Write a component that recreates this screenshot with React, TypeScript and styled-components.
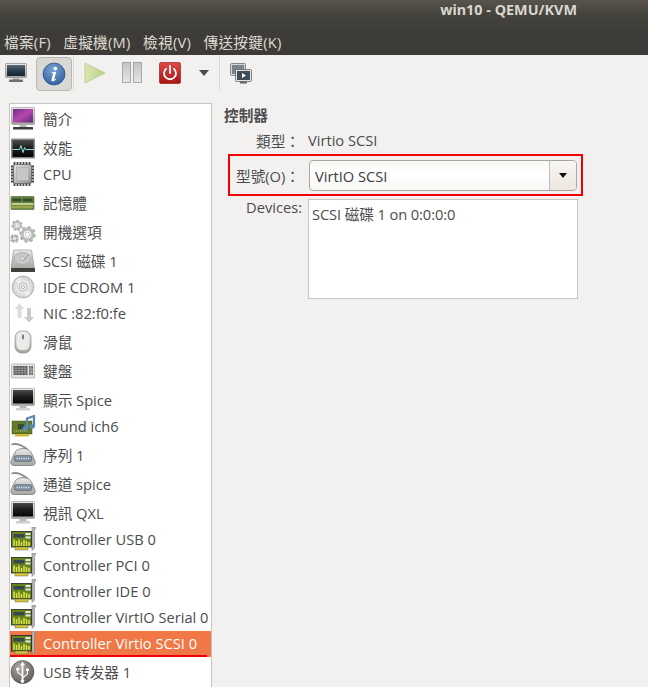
import React from 'react'
import styled, { createGlobalStyle } from 'styled-components'

const GlobalStyle = createGlobalStyle`
  html, body {
    margin: 0;
    padding: 0;
    background: #f2f1f0;
  }
  body {
    font-family: "Open Sans", "Noto Sans CJK TC", sans-serif;
    font-size: 14.67px;
    color: #4c4c4c;
  }
`

const Window = styled.div`
  width: 648px;
  height: 687px;
  overflow: hidden;
  background: #f2f1f0;
  display: flex;
  flex-direction: column;
`

const Header = styled.header`
  height: 55px;
  flex: none;
  background: linear-gradient(#58544b 0, #45433e 14px, #3e3c38 32px, #3c3b37 100%);
`

const TitleBar = styled.div`
  height: 19px;
  padding: 0 71px 0 0;
  display: flex;
  justify-content: flex-end;
  align-items: center;
  font-family: "Noto Sans", sans-serif;
  font-weight: 700;
  font-size: 14.4px;
  color: #d9d6cd;
`

const MenuBar = styled.nav`
  height: 36px;
  padding: 11px 0 0 4px;
  box-sizing: border-box;
  display: flex;
  gap: 12.5px;
  letter-spacing: 0.25px;
  line-height: 24px;
  color: #dfdbd2;
`

const Toolbar = styled.div`
  height: 36px;
  flex: none;
  display: flex;
  align-items: center;
  padding-left: 5px;
`

const ToolIcon = styled.svg<{ $ml?: number }>`
  display: block;
  flex: none;
  margin-left: ${(p) => p.$ml ?? 0}px;
`

const ActiveTool = styled.button`
  width: 36px;
  height: 34px;
  flex: none;
  margin: 1px 0 0 9px;
  padding: 0;
  display: flex;
  align-items: center;
  justify-content: center;
  border: 1px solid #b8b6b1;
  border-radius: 4px;
  background: #dad8d5;
`

const ToolSep = styled.div<{ $ml: number }>`
  width: 1px;
  height: 36px;
  flex: none;
  margin-left: ${(p) => p.$ml}px;
  background: #dcdad6;
`

const Main = styled.main`
  flex: 1;
  min-height: 0;
  display: flex;
  padding: 12px 0 0 9px;
`

const DeviceList = styled.ul`
  width: 201px;
  height: 600px;
  flex: none;
  margin: 0;
  padding: 0;
  list-style: none;
  background: #fff;
  border: 1px solid #c7c5c1;
`

const DeviceRow = styled.li<{ $tall?: boolean; $selected?: boolean }>`
  position: relative;
  box-sizing: border-box;
  height: ${(p) => (p.$tall ? 29 : 26)}px;
  padding-bottom: ${(p) => (p.$tall ? 0 : 2)}px;
  display: flex;
  align-items: center;
  gap: 7px;
  white-space: nowrap;
  background: ${(p) => (p.$selected ? '#f07746' : 'transparent')};
  color: ${(p) => (p.$selected ? '#fff' : '#4c4c4c')};

  ${(p) =>
    p.$selected
      ? `&::after {
    content: '';
    position: absolute;
    left: 0;
    bottom: 0;
    width: 197px;
    height: 2px;
    background: #f00000;
  }`
      : ''}
`

const IconSlot = styled.span`
  width: 26px;
  height: 24px;
  flex: none;
  display: flex;
  align-items: center;
`

const Details = styled.section`
  flex: 1;
  padding: 3px 0 0 12px;
`

const Heading = styled.h2`
  margin: 0 0 5px;
  font-size: 14.67px;
  line-height: 18px;
  font-weight: 700;
  color: #4c4c4c;
`

const TypeRow = styled.div`
  display: flex;
  height: 22px;
  align-items: center;
`

const FieldLabel = styled.span<{ $w: number }>`
  width: ${(p) => p.$w}px;
  flex: none;
  text-align: right;
  white-space: nowrap;
`

const FieldValue = styled.span`
  margin-left: 8px;
`

const ModelBox = styled.div`
  width: 355px;
  height: 42px;
  box-sizing: border-box;
  margin: 3px 0 0 4px;
  border: 2px solid #f00000;
  display: flex;
  align-items: center;
`

const Combo = styled.div`
  width: 268px;
  height: 31px;
  box-sizing: border-box;
  margin-left: 9px;
  display: flex;
  align-items: stretch;
  border: 1px solid #a8a6a1;
  border-radius: 4px;
  background: linear-gradient(#f7f7f5, #fff 45%, #f8f7f5);
`

const ComboText = styled.div`
  flex: 1;
  padding-left: 5px;
  line-height: 31px;
  color: #3c3c3c;
`

const ComboArrow = styled.div`
  width: 26px;
  border-left: 1px solid #c0beb9;
  border-radius: 0 3px 3px 0;
  display: flex;
  align-items: center;
  justify-content: center;
  background: linear-gradient(#f7f6f4, #efe6df);

  &::before {
    content: '';
    border-style: solid;
    border-width: 5px 4px 0;
    border-color: #111 transparent transparent;
  }
`

const DevicesRow = styled.div`
  display: flex;
  margin-top: 3px;
`

const DevicesLabel = styled.span`
  width: 78px;
  flex: none;
  margin-top: -1px;
  text-align: right;
  line-height: 18px;
`

const DevicesBox = styled.div`
  width: 270px;
  height: 100px;
  box-sizing: border-box;
  margin-left: 6px;
  padding: 5px 3px;
  border: 1px solid #c7c5c1;
  background: #fff;
  line-height: 18px;
  letter-spacing: -0.1px;
`

const GradientDefs = styled.svg`
  display: block;
  width: 0;
  height: 0;
`

function Defs() {
  return (
    <GradientDefs aria-hidden="true">
      <defs>
        <linearGradient id="silver" x1="0" y1="0" x2="0" y2="1">
          <stop offset="0" stopColor="#e8e8e6" />
          <stop offset="1" stopColor="#a6a6a3" />
        </linearGradient>
        <linearGradient id="purple" x1="0" y1="0" x2="1" y2="1">
          <stop offset="0" stopColor="#6c2f86" />
          <stop offset="0.5" stopColor="#b548b0" />
          <stop offset="1" stopColor="#5a2a74" />
        </linearGradient>
        <linearGradient id="screen" x1="0" y1="0" x2="0" y2="1">
          <stop offset="0" stopColor="#4a4a4a" />
          <stop offset="0.5" stopColor="#1c1c1c" />
          <stop offset="1" stopColor="#050505" />
        </linearGradient>
        <linearGradient id="blueScreen" x1="0" y1="0" x2="0" y2="1">
          <stop offset="0" stopColor="#5b6a78" />
          <stop offset="0.5" stopColor="#2a3c4c" />
          <stop offset="1" stopColor="#16242f" />
        </linearGradient>
        <radialGradient id="infoBlue" cx="0.45" cy="0.3" r="0.8">
          <stop offset="0" stopColor="#7aa3d3" />
          <stop offset="1" stopColor="#2a5a9c" />
        </radialGradient>
        <linearGradient id="redBtn" x1="0" y1="0" x2="0" y2="1">
          <stop offset="0" stopColor="#e04a46" />
          <stop offset="1" stopColor="#a81515" />
        </linearGradient>
        <linearGradient id="playFill" x1="0" y1="0" x2="1" y2="0">
          <stop offset="0" stopColor="#dbe6ae" />
          <stop offset="1" stopColor="#b9d08e" />
        </linearGradient>
        <linearGradient id="pauseFill" x1="0" y1="0" x2="0" y2="1">
          <stop offset="0" stopColor="#c4c4c2" />
          <stop offset="1" stopColor="#e4e4e2" />
        </linearGradient>
        <linearGradient id="chip" x1="0" y1="0" x2="1" y2="1">
          <stop offset="0" stopColor="#e4e4e3" />
          <stop offset="1" stopColor="#8e8e8c" />
        </linearGradient>
        <radialGradient id="disc" cx="0.5" cy="0.5" r="0.55">
          <stop offset="0" stopColor="#f4f4f4" />
          <stop offset="0.7" stopColor="#dcdcda" />
          <stop offset="1" stopColor="#bcbcba" />
        </radialGradient>
        <radialGradient id="usbBall" cx="0.4" cy="0.3" r="0.8">
          <stop offset="0" stopColor="#b0aca4" />
          <stop offset="1" stopColor="#57544e" />
        </radialGradient>
      </defs>
    </GradientDefs>
  )
}

const Svg = ({ children, w = 26, h = 24 }: { children: React.ReactNode; w?: number; h?: number }) => (
  <ToolIcon width={w} height={h} viewBox={`0 0 ${w} ${h}`}>
    {children}
  </ToolIcon>
)

const MonitorShape = ({ fill, light }: { fill: string; light?: boolean }) => (
  <>
    <rect x="1.5" y="0.5" width="23" height="17" rx="1" fill="url(#silver)" stroke="#8e8e8c" strokeWidth="0.6" />
    <rect x="3" y="2" width="20" height="13.5" fill={fill} />
    <rect x="9.5" y="17.5" width="7" height="2.5" fill="#b7b7b5" />
    <rect x={light ? 6 : 3} y="20" width={light ? 14 : 20} height="2.5" rx="0.6" fill={light ? '#cfcfcd' : '#3a3a3a'} />
  </>
)

const Overview = () => (
  <Svg>
    <MonitorShape fill="url(#purple)" />
  </Svg>
)

const Performance = () => (
  <Svg>
    <rect x="1" y="2.5" width="24" height="20" rx="1" fill="#8a8a88" />
    <rect x="2.5" y="4" width="21" height="17" fill="url(#screen)" />
    <path d="M2.5 13.5h7l1.5-4 2 7 1.6-5 1 2h8.4" fill="none" stroke="#8fdfe0" strokeWidth="1" />
  </Svg>
)

const Cpu = () => (
  <Svg>
    <path
      d="M1 4.500h23M1 7.500h23M1 10.500h23M1 13.500h23M1 16.500h23M1 19.500h23M4.500 0v24M7.500 0v24M10.500 0v24M13.500 0v24M16.500 0v24M19.500 0v24"
      stroke="#444442"
      strokeWidth="1.800"
      fill="none"
    />
    <rect x="3.500" y="2.500" width="18" height="19" rx="1.500" fill="url(#chip)" stroke="#5e5e5c" strokeWidth="0.7" />
    <rect x="6.500" y="5.500" width="12" height="13" fill="#c6c6c4" stroke="#a5a5a3" strokeWidth="0.5" />
  </Svg>
)

const Memory = () => (
  <Svg>
    <rect x="1" y="5.500" width="23" height="13" rx="0.6" fill="#64843e" stroke="#48602c" strokeWidth="0.6" />
    <rect x="2.500" y="7.500" width="9" height="3" fill="#3a4a2c" />
    <rect x="13" y="7.500" width="9.500" height="3" fill="#3a4a2c" />
    <rect x="1.500" y="12" width="22" height="2" fill="#c1cc94" />
    <path d="M1.500 16h22" stroke="#d6c85c" strokeWidth="2.400" strokeDasharray="1 1" />
  </Svg>
)

const Gear = ({ cx, cy, r, teeth }: { cx: number; cy: number; r: number; teeth: number }) => (
  <g>
    <circle
      cx={cx}
      cy={cy}
      r={r + r * 0.3}
      fill="none"
      stroke="#a2a2a0"
      strokeWidth={r * 0.45}
      strokeDasharray={`${(2 * Math.PI * r * 1.3) / (teeth * 2)}`}
    />
    <circle cx={cx} cy={cy} r={r} fill="none" stroke="#bcbcba" strokeWidth={r * 0.6} />
    <circle cx={cx} cy={cy} r={r * 0.45} fill="#fff" stroke="#8c8c8a" strokeWidth="0.5" />
  </g>
)

const Boot = () => (
  <Svg>
    <Gear cx={7} cy={5.500} r={3.600} teeth={7} />
    <Gear cx={17.500} cy={14.500} r={5.400} teeth={8} />
    <rect x="1.500" y="15.500" width="6" height="6" fill="none" stroke="#a8a8a6" strokeWidth="2" strokeDasharray="2 1" />
    <rect x="2.500" y="16.500" width="4" height="4" fill="#e0e0de" stroke="#8c8c8a" strokeWidth="0.5" />
  </Svg>
)

const Disk = () => (
  <Svg>
    <path d="M3.500 1h18l3 19H1z" fill="url(#silver)" stroke="#8d8d8b" strokeWidth="0.6" />
    <ellipse cx="12.500" cy="9.500" rx="8.500" ry="6" fill="#c9c9c7" stroke="#9a9a98" strokeWidth="0.6" />
    <ellipse cx="12.500" cy="9.500" rx="2.400" ry="1.500" fill="#e6e6e4" stroke="#8d8d8b" strokeWidth="0.5" />
    <path d="M18.500 6l-5.500 6" stroke="#8d8d8b" strokeWidth="0.8" />
    <rect x="1" y="19" width="24" height="4" rx="0.6" fill="#3f3f3d" />
  </Svg>
)

const Cdrom = () => (
  <Svg>
    <circle cx="13" cy="12" r="11" fill="url(#disc)" stroke="#a9a9a7" strokeWidth="0.7" />
    <path d="M13 12l7.500 6a10 10 0 0 1-5 3.500zM13 12L5.500 6a10 10 0 0 1 5-3.500z" fill="#e9eef2" />
    <circle cx="13" cy="12" r="4" fill="#f3f3f3" stroke="#a3a3a1" strokeWidth="0.7" />
    <circle cx="13" cy="12" r="1.600" fill="#fff" stroke="#8e8e8c" strokeWidth="0.7" />
  </Svg>
)

const Nic = () => (
  <Svg>
    <path d="M9.500 2.500l5 5.500h-3v9h-4V8h-3z" fill="#dcdcd8" />
    <path d="M19 21.500l-5-5.500h3V7h4v9h3z" fill="#cbcbc7" />
  </Svg>
)

const Mouse = () => (
  <Svg>
    <rect x="5" y="1" width="16" height="22" rx="6.500" fill="url(#silver)" stroke="#8d8d8b" strokeWidth="0.7" />
    <rect x="6.500" y="2" width="13" height="18" rx="5.500" fill="#ecebea" />
    <rect x="12.100" y="4.500" width="1.800" height="5" rx="0.9" fill="#707070" />
  </Svg>
)

const Keyboard = () => (
  <Svg>
    <rect x="1.500" y="5" width="23" height="14" rx="1" fill="#e4e4e2" stroke="#a2a2a0" strokeWidth="0.7" />
    <rect x="3.500" y="7" width="14" height="9" fill="#55575a" />
    <path d="M3.500 9.200h14M3.500 11.500h14M3.500 13.800h14M6 7v9M9 7v9M12 7v9M15 7v9" stroke="#c7c7c5" strokeWidth="0.5" />
    <rect x="19" y="7" width="4" height="9" fill="#6a6c6e" />
    <path d="M21 7v9M19 10h4M19 13h4" stroke="#e4e4e2" strokeWidth="0.5" />
  </Svg>
)

const Display = () => (
  <Svg>
    <MonitorShape fill="url(#screen)" light />
  </Svg>
)

const Sound = () => (
  <Svg>
    <rect x="2" y="7" width="20" height="13" fill="#5f7a28" stroke="#46591c" strokeWidth="0.5" />
    <rect x="8" y="10" width="6" height="5" fill="#3a4a34" />
    <path d="M4 17h13" stroke="#a9b84c" strokeWidth="1.500" strokeDasharray="1 1" />
    <rect x="5" y="20" width="14" height="2.500" fill="#d1b93c" />
    <path d="M17 14V4.500l7-2.500v10" fill="none" stroke="#5c88b8" strokeWidth="2.200" />
    <ellipse cx="15.200" cy="14.800" rx="2.800" ry="2.200" fill="#5c88b8" />
    <ellipse cx="22" cy="12.500" rx="2.800" ry="2.200" fill="#5c88b8" />
  </Svg>
)

const Serial = () => (
  <Svg>
    <path d="M1.500 1.500c5-1.500 11 1 16 5" fill="none" stroke="#8e8e8c" strokeWidth="1.800" />
    <path d="M1 18l3.500-8c1.500-3 4.500-4.500 8.500-4.500s7 1.500 8.500 4.500l3.500 8c.8 2.200-.5 4.500-2.500 4.500H3.500c-2 0-3.300-2.300-2.500-4.500z" fill="url(#silver)" stroke="#6f6f6d" strokeWidth="0.7" />
    <rect x="4" y="12.500" width="18" height="6" rx="2" fill="#7e8fa0" stroke="#55555a" strokeWidth="0.5" />
    <path d="M6.500 15.500h13" stroke="#dce3ea" strokeWidth="1.400" strokeDasharray="1.300 1" />
  </Svg>
)

const Controller = () => (
  <Svg>
    <path d="M22 0h3.500v2H24.500v19l-2.500 2.500z" fill="#b9b9b7" stroke="#6e6e6c" strokeWidth="0.5" />
    <rect x="1.500" y="4.500" width="20" height="15.500" fill="#66841a" stroke="#222" strokeWidth="0.8" />
    <rect x="3.500" y="7" width="11" height="3.500" fill="#37474f" />
    <rect x="15.500" y="6" width="5" height="2" fill="#dfe6ea" />
    <rect x="15.500" y="9.500" width="5" height="2" fill="#dfe6ea" />
    <path d="M4 19v-6.500M6.500 19v-5M9 19v-6.500M11.500 19v-4M14 19v-6M16.500 19v-5M19 19v-4" stroke="#dfe24e" strokeWidth="1.500" />
    <rect x="5" y="20" width="13" height="3" fill="#d3c23a" stroke="#555" strokeWidth="0.4" />
  </Svg>
)

const Usb = () => (
  <Svg>
    <circle cx="12.500" cy="12" r="11.500" fill="url(#usbBall)" stroke="#46433f" strokeWidth="0.5" />
    <path d="M12.500 1.500l2.500 4h-1.600v11l3.400-2.700V11H15.900V8.500h3V11h-1v3.300L13.400 18v1.500a1.800 1.800 0 1 1-1.800 0V16l-4.400-3.600v-1.800a1.600 1.600 0 1 1 1.100 0v1.300l3.300 2.600V5.500H10z" fill="#fff" />
  </Svg>
)

const Pc = () => (
  <ToolIcon width={22} height={20} viewBox="0 0 22 20">
    <rect x="0.500" y="0.500" width="21" height="14" rx="1" fill="url(#silver)" stroke="#777" strokeWidth="0.6" />
    <rect x="2" y="2" width="18" height="11" fill="url(#blueScreen)" />
    <rect x="8" y="14.500" width="6" height="2.500" fill="#b2b2b0" />
    <rect x="4" y="16.500" width="14" height="2.500" rx="0.8" fill="#6e6e6c" />
  </ToolIcon>
)

const InfoBall = () => (
  <ToolIcon width={24} height={24} viewBox="0 0 24 24">
    <circle cx="12" cy="12" r="11" fill="url(#infoBlue)" stroke="#25507f" strokeWidth="0.7" />
    <circle cx="13.400" cy="6.600" r="1.800" fill="#fff" />
    <path d="M9.600 10.200l4.600-.5-1.900 7.400c-.1.500.3.600 1.500-.3l.3.400c-1.300 1.400-2.400 2-3.500 2-1 0-1.300-.7-1-1.700l1.300-5.500c.2-.8-.2-1-1-.9z" fill="#fff" />
  </ToolIcon>
)

const Play = () => (
  <ToolIcon $ml={10} width={22} height={22} viewBox="0 0 22 22">
    <path d="M1 1l20 10L1 21z" fill="url(#playFill)" stroke="#b5c98c" strokeWidth="0.8" />
  </ToolIcon>
)

const Pause = () => (
  <ToolIcon $ml={16} width={20} height={22} viewBox="0 0 20 22">
    <rect x="0.500" y="0.500" width="8" height="20" fill="url(#pauseFill)" stroke="#9b9b99" strokeWidth="0.8" />
    <rect x="11.500" y="0.500" width="8" height="20" fill="url(#pauseFill)" stroke="#9b9b99" strokeWidth="0.8" />
  </ToolIcon>
)

const Power = () => (
  <ToolIcon $ml={17} width={22} height={22} viewBox="0 0 22 22">
    <rect x="0.500" y="0.500" width="21" height="21" rx="1.500" fill="url(#redBtn)" stroke="#8c1010" strokeWidth="0.6" />
    <path d="M7 6.800a6 6 0 1 0 8 0" fill="none" stroke="#fff" strokeWidth="1.800" strokeLinecap="round" />
    <path d="M11 4v7" stroke="#fff" strokeWidth="1.800" strokeLinecap="round" />
  </ToolIcon>
)

const MenuArrow = () => (
  <ToolIcon $ml={18} width={10} height={6} viewBox="0 0 10 6">
    <path d="M0 0h10L5 6z" fill="#4a4a48" />
  </ToolIcon>
)

const Consoles = () => (
  <ToolIcon $ml={10} width={22} height={21} viewBox="0 0 22 21">
    <rect x="0.500" y="0.500" width="15" height="12" rx="1" fill="#d4d4d2" stroke="#666" strokeWidth="0.7" />
    <rect x="2" y="2" width="12" height="9" fill="#7a838c" />
    <rect x="5.500" y="6.500" width="16" height="12" rx="1" fill="#e2e2e0" stroke="#555" strokeWidth="0.7" />
    <rect x="7" y="8" width="13" height="9" fill="#3e4d5a" />
    <path d="M12 10l4 2.500-4 2.500z" fill="#fff" />
    <rect x="10" y="18.500" width="7" height="2" fill="#666" />
  </ToolIcon>
)

const devices: { label: string; Icon: React.FC; tall?: boolean; selected?: boolean }[] = [
  { label: '簡介', Icon: Overview, tall: true },
  { label: '效能', Icon: Performance, tall: true },
  { label: 'CPU', Icon: Cpu },
  { label: '記憶體', Icon: Memory, tall: true },
  { label: '開機選項', Icon: Boot, tall: true },
  { label: 'SCSI 磁碟 1', Icon: Disk, tall: true },
  { label: 'IDE CDROM 1', Icon: Cdrom },
  { label: 'NIC :82:f0:fe', Icon: Nic },
  { label: '滑鼠', Icon: Mouse, tall: true },
  { label: '鍵盤', Icon: Keyboard, tall: true },
  { label: '顯示 Spice', Icon: Display, tall: true },
  { label: 'Sound ich6', Icon: Sound },
  { label: '序列 1', Icon: Serial, tall: true },
  { label: '通道 spice', Icon: Serial, tall: true },
  { label: '視訊 QXL', Icon: Display, tall: true },
  { label: 'Controller USB 0', Icon: Controller },
  { label: 'Controller PCI 0', Icon: Controller },
  { label: 'Controller IDE 0', Icon: Controller },
  { label: 'Controller VirtIO Serial 0', Icon: Controller },
  { label: 'Controller Virtio SCSI 0', Icon: Controller, selected: true },
  { label: 'USB 转发器 1', Icon: Usb, tall: true },
]

const menus = ['檔案(F)', '虛擬機(M)', '檢視(V)', '傳送按鍵(K)']

export default function App() {
  return (
    <Window>
      <GlobalStyle />
      <Defs />
      <Header>
        <TitleBar>win10 - QEMU/KVM</TitleBar>
        <MenuBar>
          {menus.map((m) => (
            <span key={m}>{m}</span>
          ))}
        </MenuBar>
      </Header>
      <Toolbar>
        <Pc />
        <ActiveTool aria-label="info">
          <InfoBall />
        </ActiveTool>
        <ToolSep $ml={1} />
        <Play />
        <Pause />
        <Power />
        <MenuArrow />
        <ToolSep $ml={10} />
        <Consoles />
      </Toolbar>
      <Main>
        <DeviceList>
          {devices.map(({ label, Icon, tall, selected }) => (
            <DeviceRow key={label} $tall={tall} $selected={selected}>
              <IconSlot>
                <Icon />
              </IconSlot>
              {label}
            </DeviceRow>
          ))}
        </DeviceList>
        <Details>
          <Heading>控制器</Heading>
          <TypeRow>
            <FieldLabel $w={76}>類型：</FieldLabel>
            <FieldValue>Virtio SCSI</FieldValue>
          </TypeRow>
          <ModelBox>
            <FieldLabel $w={70}>型號(O)：</FieldLabel>
            <Combo>
              <ComboText>VirtIO SCSI</ComboText>
              <ComboArrow />
            </Combo>
          </ModelBox>
          <DevicesRow>
            <DevicesLabel>Devices:</DevicesLabel>
            <DevicesBox>SCSI 磁碟 1 on 0:0:0:0</DevicesBox>
          </DevicesRow>
        </Details>
      </Main>
    </Window>
  )
}
